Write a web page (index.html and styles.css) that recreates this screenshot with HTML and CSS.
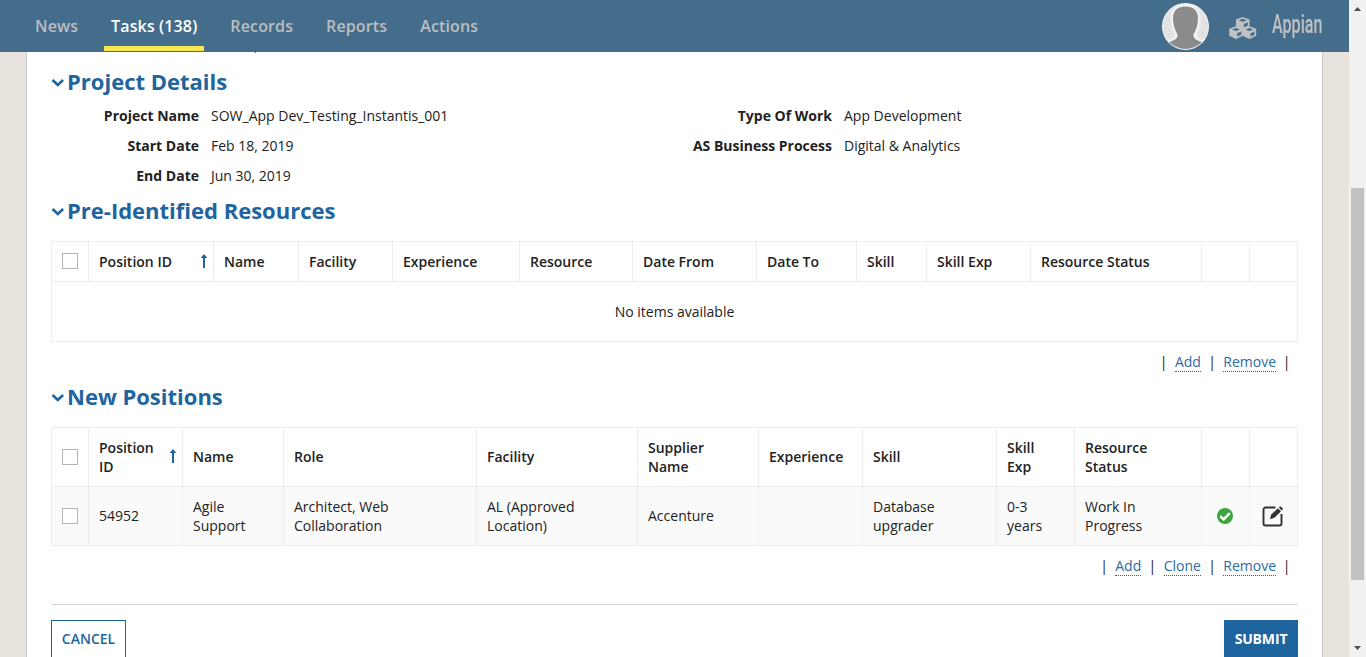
FILE: index.html
```html
<!DOCTYPE html>
<html lang="en">
<head>
<meta charset="utf-8">
<title>Tasks</title>
<link rel="stylesheet" href="styles.css">
</head>
<body>
<div class="app">
  <div class="page">
    <header class="topbar">
      <nav class="tabs">
        <a class="tab">News</a>
        <a class="tab active">Tasks (138)</a>
        <a class="tab">Records</a>
        <a class="tab">Reports</a>
        <a class="tab">Actions</a>
      </nav>
      <div class="tools">
        <svg class="avatar" width="48" height="48" viewBox="0 0 48 48">
          <defs>
            <clipPath id="face"><circle cx="23.500" cy="24.500" r="22.500"/></clipPath>
            <filter id="soft" x="-20%" y="-20%" width="140%" height="140%"><feGaussianBlur stdDeviation="1.600"/></filter>
          </defs>
          <circle cx="23.500" cy="24.500" r="23.500" fill="#f4f4f4"/>
          <g clip-path="url(#face)">
            <rect width="48" height="48" fill="#e2e2e2"/>
            <path d="M23.500 4.500C15 4.500 10.800 9 11 16.500c.2 6 1.500 11 4.200 15.500.8 2.500-.2 4.500-3 6-3 1.500-5.500 2-7.200 4V49h37v-7c-1.700-2-4.200-2.500-7.200-4-2.800-1.500-3.800-3.500-3-6 2.700-4.500 4-9.500 4.200-15.500C36.200 9 32 4.500 23.500 4.500z" fill="#fff" stroke="#fff" stroke-width="3" filter="url(#soft)"/>
            <path d="M23.500 4.500C15 4.500 10.800 9 11 16.500c.2 6 1.500 11 4.200 15.500.8 2.500-.2 4.500-3 6-3 1.500-5.500 2-7.200 4V49h37v-7c-1.700-2-4.200-2.500-7.200-4-2.800-1.500-3.800-3.500-3-6 2.700-4.500 4-9.500 4.200-15.500C36.200 9 32 4.500 23.500 4.500z" fill="#8b8b8b"/>
          </g>
        </svg>
        <svg class="cubes" width="28" height="24" viewBox="0 0 28 24">
          <defs>
            <g id="cube">
              <path d="M7 0l6.800 2.600v7L7 12.700.2 9.600v-7z" fill="#bfc1c2"/>
              <path d="M7 1.700l3.900 1.500L7 4.800 3.100 3.200zM8.200 7l3.900-1.700v3.200L8.200 10.400z" fill="#446c8b"/>
            </g>
          </defs>
          <use href="#cube" x="6.700"/><use href="#cube" y="9.200"/><use href="#cube" x="13.400" y="9.200"/>
        </svg>
        <div class="brand"><span>Appian</span></div>
      </div>
    </header>

    <main class="panel">
      <div class="overflow-mark"></div>
      <h2 class="section"><svg class="chev" width="13" height="8" viewBox="0 0 13 8"><path d="M1.500 1l5.300 5 5.300-5"/></svg>Project Details</h2>
      <div class="details">
        <dl class="fields left">
          <dt>Project Name</dt><dd>SOW_App Dev_Testing_Instantis_001</dd>
          <dt>Start Date</dt><dd>Feb 18, 2019</dd>
          <dt>End Date</dt><dd>Jun 30, 2019</dd>
        </dl>
        <dl class="fields right">
          <dt>Type Of Work</dt><dd>App Development</dd>
          <dt>AS Business Process</dt><dd>Digital &amp; Analytics</dd>
        </dl>
      </div>

      <h2 class="section"><svg class="chev" width="13" height="8" viewBox="0 0 13 8"><path d="M1.500 1l5.300 5 5.300-5"/></svg>Pre-Identified Resources</h2>
      <table class="grid resources">
        <colgroup><col width="37"><col width="125"><col width="85"><col width="94"><col width="127"><col width="113"><col width="124"><col width="100"><col width="70"><col width="104"><col width="171"><col width="48"><col width="48"></colgroup>
        <tr>
          <th><span class="box"></span></th>
          <th><div class="sorted">Position ID<svg class="arrow" width="8" height="14" viewBox="0 0 8 14"><path d="M4 0l3.400 4H5v10H3V4H.6z"/></svg></div></th>
          <th>Name</th><th>Facility</th><th>Experience</th><th>Resource</th><th>Date From</th><th>Date To</th><th>Skill</th><th>Skill Exp</th><th>Resource Status</th><th></th><th></th>
        </tr>
        <tr><td class="empty" colspan="13">No items available</td></tr>
      </table>
      <div class="links"><i>|</i><a>Add</a><i>|</i><a>Remove</a><i class="last">|</i></div>

      <h2 class="section"><svg class="chev" width="13" height="8" viewBox="0 0 13 8"><path d="M1.500 1l5.300 5 5.300-5"/></svg>New Positions</h2>
      <table class="grid positions">
        <colgroup><col width="37"><col width="94"><col width="101"><col width="193"><col width="161"><col width="121"><col width="104"><col width="134"><col width="78"><col width="127"><col width="48"><col width="48"></colgroup>
        <tr>
          <th><span class="box"></span></th>
          <th><div class="sorted">Position<br>ID<svg class="arrow" width="8" height="14" viewBox="0 0 8 14"><path d="M4 0l3.400 4H5v10H3V4H.6z"/></svg></div></th>
          <th class="one">Name</th><th class="one">Role</th><th class="one">Facility</th><th>Supplier<br>Name</th><th class="one">Experience</th><th class="one">Skill</th><th>Skill<br>Exp</th><th>Resource<br>Status</th><th></th><th></th>
        </tr>
        <tr class="item">
          <td><span class="box"></span></td>
          <td class="one">54952</td><td>Agile<br>Support</td><td>Architect, Web<br>Collaboration</td><td>AL (Approved<br>Location)</td><td class="one">Accenture</td><td></td><td>Database<br>upgrader</td><td>0-3<br>years</td><td>Work In<br>Progress</td>
          <td class="icon"><svg width="16" height="16" viewBox="0 0 16 16"><circle cx="8" cy="8" r="8" fill="#3ba63b"/><path d="M3.300 8.200l3.300 3.200 6.100-6.200" fill="none" stroke="#fff" stroke-width="2.500"/></svg></td>
          <td class="icon"><svg width="22" height="22" viewBox="0 0 22 22"><path d="M13.500 2.500h-10a2 2 0 0 0-2 2v14a2 2 0 0 0 2 2h14a2 2 0 0 0 2-2V9" fill="none" stroke="#333" stroke-width="1.900"/><path d="M8 14.200l1.200-4.600 6.800-6.300 3 3.100-6.700 6.400z" fill="#333"/><path d="M16.800 2.600l1-.9a1 1 0 0 1 1.300 0l1.500 1.500a1 1 0 0 1 0 1.300l-.9.900z" fill="#333"/></svg></td>
        </tr>
      </table>
      <div class="links"><i>|</i><a>Add</a><i>|</i><a>Clone</a><i>|</i><a>Remove</a><i class="last">|</i></div>

      <div class="actions">
        <button class="btn">CANCEL</button>
        <button class="btn primary">SUBMIT</button>
      </div>
    </main>
  </div>
  <div class="scrollbar">
    <svg width="7" height="4" viewBox="0 0 7 4"><path d="M3.500 0L7 4H0z"/></svg>
    <div class="thumb"></div>
    <svg width="7" height="4" viewBox="0 0 7 4"><path d="M0 0h7L3.500 4z"/></svg>
  </div>
</div>
</body>
</html>
```
FILE: styles.css
```css
* { box-sizing: border-box; }
body { margin: 0; height: 657px; overflow: hidden; font: 14px/19px "Open Sans", sans-serif; color: #222; }
.app { display: flex; height: 657px; overflow: hidden; }
.page { width: 1349px; height: 657px; overflow: hidden; background: #e8e3dc; }
.topbar { height: 52px; background: #446c8b; display: flex; justify-content: space-between; }
.tabs { display: flex; padding-left: 28px; gap: 19px; height: 51px; }
.tab { padding: 15px 7px 0; font-size: 16px; line-height: 22px; letter-spacing: .13px; font-weight: 600; color: #bcbec0; border-bottom: 5px solid transparent; }
.tab.active { color: #fff; border-bottom-color: #f9e654; }
.tools { display: flex; }
.avatar { margin-top: 2px; }
.cubes { margin: 17px 0 0 19px; }
.brand { width: 77px; margin: 10px 0 0 15px; font: 500 25px/30px Roboto, sans-serif; color: #bfc1c2; }
.brand span { display: inline-block; transform: scaleX(.645); transform-origin: 0 0; }
.panel { width: 1297px; height: 620px; margin-left: 26px; padding: 0 24px; background: #fff; border: solid #c9c9c9; border-width: 0 1px; }
.overflow-mark { width: 1px; height: 1px; margin-left: 204px; background: #555; }
.section { display: flex; align-items: center; gap: 3px; margin: 0; height: 30px; font-size: 22px; line-height: 30px; font-weight: 700; color: #1e659f; white-space: nowrap; }
.overflow-mark + .section { margin-top: 13px; }
.chev { fill: none; stroke: #1e659f; stroke-width: 2.600; margin-top: 3px; }
.details { display: flex; height: 99px; padding-top: 10px; }
.fields { display: grid; grid-auto-rows: 19px; row-gap: 11px; column-gap: 12px; margin: 0; align-content: start; }
.fields.left { grid-template-columns: 148px 473px; }
.fields.right { grid-template-columns: 148px 300px; }
dt { font-weight: 700; text-align: right; white-space: nowrap; }
dd { margin: 0; }
.grid { table-layout: fixed; width: 1247px; border-collapse: separate; border-spacing: 0; border: solid #ededed; border-width: 1px 0 0 1px; margin-top: 16px; }
.grid th, .grid td { padding: 0 0 0 10px; text-align: left; vertical-align: middle; border: solid #ededed; border-width: 0 1px 1px 0; }
.grid th { font-weight: 600; }
.resources th { height: 40px; }
.grid .empty { height: 60px; padding: 0; text-align: center; }
.positions th, .positions td { height: 59px; }
.positions .one { padding-bottom: 1px; }
.item { background: #fafafa; }
.grid .icon { padding: 0 1px 0 0; text-align: center; }
.icon svg { display: block; margin: 0 auto; }
.box { display: block; width: 16px; height: 16px; border: 1px solid #b4b4b4; background: #fff; }
.resources .box { margin-bottom: 1px; }
.sorted { position: relative; }
.sorted .arrow { position: absolute; right: 5px; top: calc(50% - 8px); fill: #1e659f; }
.links { display: flex; justify-content: flex-end; padding: 10px 1px 0 0; height: 39px; }
.links a { color: #2b6aa3; height: 20px; border-bottom: 1px dotted #555; }
.links i { font-style: normal; width: 22.4px; text-align: center; }
.links .last { width: 21px; }
.actions { display: flex; justify-content: space-between; margin-top: 19px; padding-top: 15px; border-top: 1px solid #d2d2d2; }
.btn { width: 75px; height: 38px; padding: 0 0 2px; font: 600 14px/19px "Open Sans", sans-serif; color: #1e659f; background: #fff; border: 1px solid #1e659f; }
.btn.primary { width: 74px; color: #fff; background: #1e659f; font-weight: 700; letter-spacing: -.15px; }
.scrollbar { width: 17px; background: #f1f1f1; display: flex; flex-direction: column; align-items: center; padding: 7px 0; fill: #505050; }
.thumb { width: 13px; height: 392px; margin: 177px 0 auto; background: #c1c1c1; }
```
